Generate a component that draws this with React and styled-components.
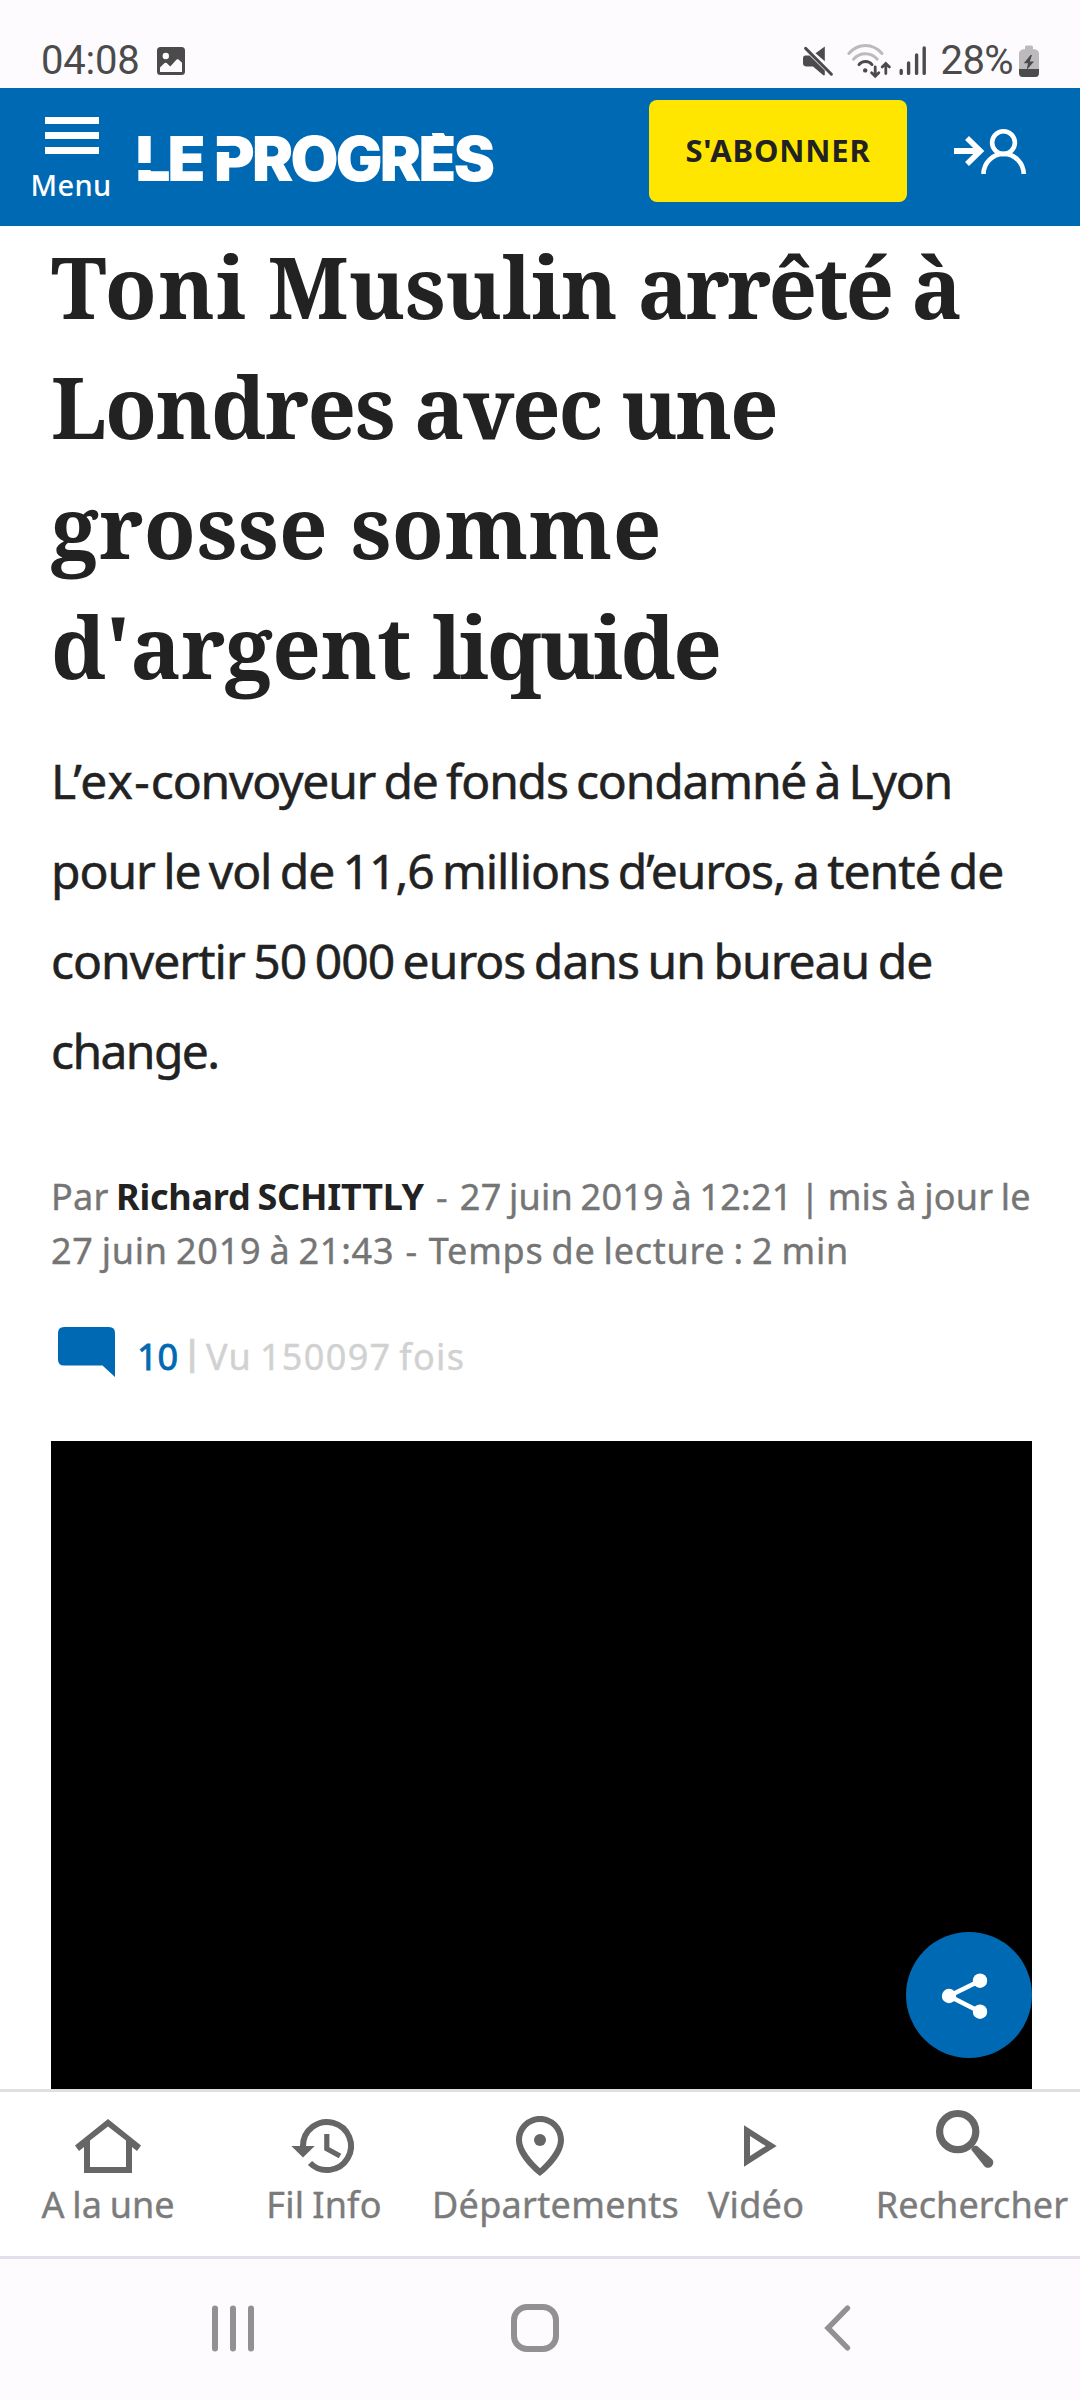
import React from "react";
import styled, { createGlobalStyle } from "styled-components";

const SANS = '"Noto Sans", "Open Sans", sans-serif';
const SERIF = '"Noto Serif", "DejaVu Serif Condensed", "DejaVu Serif", serif';
const BLUE = "#0069b3";

const GlobalStyle = createGlobalStyle`
  *, *::before, *::after { box-sizing: border-box; }
  body { margin: 0; background: #fff; font-family: ${SANS}; }
  h1, p { margin: 0; }
  svg { display: block; flex: none; overflow: visible; }
`;

const Screen = styled.div`
  width: 1080px;
  height: 2400px;
  display: flex;
  flex-direction: column;
  overflow: hidden;
  background: #fff;
`;

const StatusBar = styled.div`
  height: 88px;
  flex: none;
  display: flex;
  align-items: flex-start;
  padding: 39px 41px 0 41px;
  background: #fdfbfe;
  color: #4b4b4b;
`;

const StatusText = styled.span`
  margin-left: ${(p) => p.$gap || 0}px;
  font: 400 40px/44px Roboto, sans-serif;
  letter-spacing: ${(p) => p.$spacing}px;
`;

const StatusGroup = styled.div`
  margin-left: auto;
  display: flex;
  align-items: flex-start;
`;

const StatusIcon = styled.svg`
  margin-left: ${(p) => p.$gap}px;
  margin-top: ${(p) => p.$drop}px;
`;

const Header = styled.header`
  height: 138px;
  flex: none;
  display: flex;
  align-items: flex-start;
  background: ${BLUE};
  color: #fff;
`;

const MenuButton = styled.div`
  width: 84px;
  margin: 29px 0 0 30px;
  display: flex;
  flex-direction: column;
  align-items: center;
  gap: 13px;
`;

const MenuBars = styled.div`
  width: 54px;
  display: grid;
  gap: 8px;
`;

const Bar = styled.span`
  height: 7px;
  background: #fff;
`;

const MenuLabel = styled.span`
  margin-right: 2px;
  font-size: 29px;
  line-height: 36px;
  font-weight: 500;
  letter-spacing: 0.4px;
`;

const Logo = styled.div`
  position: relative;
  display: flex;
  gap: 11.5px;
  margin: 39.5px 0 0 21.5px;
  font: 900 62px/62px Inter, sans-serif;
`;

const LogoWord = styled.span`
  letter-spacing: ${(p) => p.$spacing}px;
  white-space: nowrap;
`;

const CutAccent = styled.span`
  display: inline-block;
  clip-path: inset(8px 0 0 0);
`;

const LogoCut = styled.span`
  position: absolute;
  left: ${(p) => p.$x}px;
  top: ${(p) => p.$y}px;
  width: ${(p) => p.$w}px;
  height: ${(p) => p.$h}px;
  background: ${BLUE};
`;

const LogoTick = styled.span`
  position: absolute;
  left: 296px;
  top: 5.5px;
  width: 15px;
  height: 5px;
  background: #fff;
  clip-path: polygon(0 0, 80% 0, 100% 100%, 14% 100%);
`;

const Subscribe = styled.div`
  width: 258px;
  height: 102px;
  margin: 12px 47px 0 auto;
  padding-bottom: 3px;
  display: flex;
  align-items: center;
  justify-content: center;
  border-radius: 8px;
  background: #ffe600;
  color: #222;
  font-size: 31px;
  line-height: 40px;
  font-weight: 700;
  letter-spacing: 0.8px;
`;

const LoginIcon = styled.svg`
  margin: 48px 53px 0 0;
`;

const Article = styled.main`
  flex: none;
  height: 1863px;
  padding: 0 48px 0 51px;
  position: relative;
`;

const Title = styled.h1`
  font-family: ${SERIF};
  font-size: 85px;
  line-height: 120px;
  font-weight: 700;
  color: #222;
`;

const Lead = styled.p`
  margin-top: 30px;
  font-size: 48px;
  line-height: 90px;
  word-spacing: -3px;
  color: #222;
  -webkit-text-stroke: 0.5px currentColor;
`;

const Meta = styled.p`
  margin-top: 74px;
  font-size: 36px;
  line-height: 54px;
  word-spacing: -2px;
  color: #757575;
  -webkit-text-stroke: 0.4px currentColor;
`;

const Line = styled.span`
  display: block;
  width: max-content;
  white-space: nowrap;
  letter-spacing: ${(p) => p.$spacing || 0}px;
`;

const Word = styled.span`
  letter-spacing: ${(p) => p.$spacing}px;
`;

const Dash = styled.span`
  margin: 0 ${(p) => p.$gap}px;
`;

const Author = styled.strong`
  font-weight: 700;
  letter-spacing: -0.25px;
  color: #222;
  -webkit-text-stroke: 0;
`;

const Stats = styled.div`
  display: flex;
  margin: 49px 0 0 7px;
  height: 50px;
  font-size: 36px;
  line-height: 50px;
  color: #d1d1d1;
  -webkit-text-stroke: 0.4px currentColor;
`;

const Count = styled.span`
  margin: 5px 0 0 22px;
  width: 41px;
  font-weight: 400;
  color: ${BLUE};
  -webkit-text-stroke: 0.9px currentColor;
`;

const Divider = styled.span`
  width: 28px;
  text-align: center;
  font-size: 34px;
  font-weight: 700;
`;

const Views = styled.span`
  margin-top: 5px;
  white-space: nowrap;
  word-spacing: -3px;
  letter-spacing: 1.35px;
`;

const Video = styled.div`
  margin-top: 64px;
  width: 981px;
  height: 648px;
  background: #000;
`;

const ShareButton = styled.div`
  position: absolute;
  right: 48px;
  bottom: 31px;
  width: 126px;
  height: 126px;
  border-radius: 50%;
  background: ${BLUE};
`;

const TabBar = styled.nav`
  height: 167px;
  flex: none;
  display: grid;
  grid-template-columns: repeat(5, 216px);
  border-top: 3px solid #e0e0e0;
  background: #fff;
`;

const Tab = styled.div`
  padding-top: 18px;
  color: #666;
`;

const TabIcon = styled.svg`
  margin: 0 auto;
`;

const TabLabel = styled.div`
  font-size: 36px;
  line-height: 45px;
  text-align: center;
  white-space: nowrap;
  color: #7b7b7b;
  -webkit-text-stroke: 0.4px currentColor;
  word-spacing: -1.5px;
  letter-spacing: ${(p) => p.$spacing}px;
`;

const SystemNav = styled.div`
  flex: none;
  height: 144px;
  border-top: 3px solid #e3e0ec;
  background: #fdfbfe;
  display: flex;
  align-items: flex-start;
  padding: 45px 0 0 211px;
`;

const NavGlyph = styled.svg`
  margin-left: ${(p) => p.$gap}px;
`;

const TABS = [
  {
    label: "A la une",
    spacing: 0,
    icon: (
      <path
        fillRule="evenodd"
        fill="currentColor"
        d="M36 9 69 35.5 65 41 60 37V63H12V37L7 41 3 35.5ZM36 16.6 18 30.4V57H54V30.4Z"
      />
    ),
  },
  {
    label: "Fil Info",
    spacing: 0.2,
    icon: (
      <>
        <path d="M15 36A24 24 0 1 1 22 53" fill="none" stroke="currentColor" strokeWidth="6" />
        <path d="M3.3 36H26.7L15 47.6Z" fill="currentColor" />
        <path d="M38.8 24V38.8L52 46" fill="none" stroke="currentColor" strokeWidth="5.2" />
      </>
    ),
  },
  {
    label: "Départements",
    spacing: 0.3,
    icon: (
      <>
        <path
          fillRule="evenodd"
          fill="currentColor"
          d="M36 6C22.7 6 12 16.7 12 30C12 48.5 36 66 36 66S60 48.5 60 30C60 16.7 49.3 6 36 6ZM18 30C18 20 26 12 36 12S54 20 54 30C54 39.5 44 50.5 36 58.2C28 50.5 18 39.5 18 30Z"
        />
        <circle cx="36" cy="30" r="6" fill="currentColor" />
      </>
    ),
  },
  {
    label: "Vidéo",
    spacing: 0.3,
    icon: (
      <path
        fillRule="evenodd"
        fill="currentColor"
        d="M24 15.3 56.7 36 24 56.7ZM30 25.9V46.1L45.7 36Z"
      />
    ),
  },
  {
    label: "Rechercher",
    spacing: 0.1,
    icon: (
      <>
        <circle cx="21.7" cy="21.6" r="18.1" fill="none" stroke="currentColor" strokeWidth="7.2" />
        <path
          d="M35.3 39.8L48.4 56.2C50.5 58.4 53.5 58.2 55.6 56.4C57.8 54.2 58 51 55.9 49L41.5 36.2C38.5 35 35.2 37 35.3 39.8Z"
          fill="currentColor"
        />
      </>
    ),
  },
];

export default function App() {
  return (
    <>
      <GlobalStyle />
      <Screen>
        <StatusBar>
          <StatusText $spacing={-0.2}>04:08</StatusText>
          <StatusIcon $gap={17.4} $drop={8} width="28" height="28" viewBox="0 0 28 28">
            <path
              fillRule="evenodd"
              fill="#4b4b4b"
              d="M3.5 0H24.5A3.5 3.5 0 0 1 28 3.5V24.5A3.5 3.5 0 0 1 24.5 28H3.5A3.5 3.5 0 0 1 0 24.5V3.5A3.5 3.5 0 0 1 3.5 0ZM8.8 5.8A3.2 3.2 0 1 0 8.8 12.2A3.2 3.2 0 1 0 8.8 5.8ZM3 25H25V15.8L21.6 12.4Q20.6 11.8 19.6 12.6L13.3 19.4L9.6 15.9Q8.6 15.3 7.6 16.1L3 20.5Z"
            />
          </StatusIcon>
          <StatusGroup>
            <StatusIcon $gap={0} $drop={6} width="30" height="32" viewBox="0 0 30 32" fill="#4b4b4b">
              <path d="M12.5 8.2 21.8 1.4V16.3Z" />
              <path d="M0 13.5Q0 10.8 2.6 10.6H6.5L21.8 25.5V29.5Q21.5 31 20 30L10 21.4H3Q0 21.2 0 18.3Z" />
              <path d="M2.6 3.4 28.4 29.2" stroke="#4b4b4b" strokeWidth="3" strokeLinecap="round" />
            </StatusIcon>
            <StatusIcon $gap={14} $drop={5} width="44" height="34" viewBox="0 0 44 34" fill="none" strokeLinecap="round">
              <path d="M1.8 9.5Q9 1.5 18.5 1.5T35 9.5" stroke="#bcbabd" strokeWidth="3" />
              <path d="M6.5 15.2Q11.5 9.7 18.5 9.7T30.3 15.2" stroke="#bcbabd" strokeWidth="3" />
              <path d="M12 20.6Q14.5 17.6 18.5 17.6T25 20.6" stroke="#4b4b4b" strokeWidth="3" />
              <circle cx="18.2" cy="26.4" r="2.2" fill="#4b4b4b" />
              <path
                d="M28.2 23V32M24.6 28.8 28.2 32.2 31.8 28.8M38.8 29.5V19.5M35.2 23 38.8 19.4 42.4 23"
                stroke="#4b4b4b"
                strokeWidth="2.8"
              />
            </StatusIcon>
            <StatusIcon
              $gap={8}
              $drop={7}
              width="28"
              height="30"
              viewBox="0 0 28 30"
              stroke="#4b4b4b"
              strokeWidth="3.4"
              strokeLinecap="round"
            >
              <path d="M2.2 24.5V27.4M9.6 17V27.4M17.6 9V27.4M25.2 2V27.4" />
            </StatusIcon>
            <StatusText $gap={14} $spacing={-0.6}>28%</StatusText>
            <StatusIcon $gap={6} $drop={6} width="20" height="32" viewBox="0 0 20 32">
              <path
                d="M6 2Q6 .5 7.5.5H12.5Q14 .5 14 2V4.3H16Q20 5.5 20 8.5V25H0V8.5Q0 5.5 4 4.3H6Z"
                fill="#bcbabd"
              />
              <path d="M0 24H20V28Q20 32 16.5 32H3.5Q0 32 0 28Z" fill="#4b4b4b" />
              <path d="M11.5 10 4.8 18.2H9L7.6 25 15 16.4H10.8L13 10Z" fill="#4b4b4b" />
            </StatusIcon>
          </StatusGroup>
        </StatusBar>

        <Header>
          <MenuButton>
            <MenuBars>
              <Bar />
              <Bar />
              <Bar />
            </MenuBars>
            <MenuLabel>Menu</MenuLabel>
          </MenuButton>
          <Logo>
            <LogoWord $spacing={-3}>LE</LogoWord>
            <LogoWord $spacing={-2.8}>
              PROGR<CutAccent>È</CutAccent>S
            </LogoWord>
            <LogoCut $x={0} $y={35.3} $w={16} $h={7.3} />
            <LogoCut $x={78} $y={18.3} $w={17} $h={6} />
            <LogoTick />
          </Logo>
          <Subscribe>S'ABONNER</Subscribe>
          <LoginIcon width="73" height="38" viewBox="0 0 73 38" fill="none" stroke="#fff">
            <path d="M0 15H26" strokeWidth="6" />
            <path d="M13 2 26.3 15 13 28" strokeWidth="5.6" />
            <circle cx="49.5" cy="6.6" r="11.4" strokeWidth="4.6" />
            <path d="M29.5 38A20 20 0 0 1 69.7 38" strokeWidth="4.6" />
          </LoginIcon>
        </Header>

        <Article>
          <Title>
            <Line $spacing={-2}>
              <Word $spacing={1.4}>Toni</Word> <Word $spacing={-0.3}>Musulin</Word>{" "}
              <Word $spacing={-3}>arrêté</Word> à
            </Line>
            <Line $spacing={-2.2}>
              <Word $spacing={-1.5}>Londres</Word> avec une
            </Line>
            <Line $spacing={0.4}>grosse somme</Line>
            <Line $spacing={-1.3}>
              <Word $spacing={-0.3}>d'argent</Word> <Word $spacing={-2.6}>liquide</Word>
            </Line>
          </Title>
          <Lead>
            <Line $spacing={-1.2}>
              <Word $spacing={1.2}>L’ex-</Word>convoyeur de fonds condamné à Lyon
            </Line>
            <Line $spacing={-1.08}>pour le vol de 11,6 millions d’euros, a tenté de</Line>
            <Line $spacing={-0.98}>convertir 50 000 euros dans un bureau de</Line>
            <Line $spacing={-1.6}>change.</Line>
          </Lead>
          <Meta>
            <Line $spacing={0.22}>
              Par <Author>Richard SCHITTLY</Author> <Dash $gap={4.5}>-</Dash> 27 juin 2019 à 12:21 | mis à jour le
            </Line>
            <Line $spacing={0.75}>
              27 juin 2019 à 21:43 <Dash $gap={3}>-</Dash> Temps de lecture : 2 min
            </Line>
          </Meta>
          <Stats>
            <svg width="57" height="50" viewBox="0 0 57 50">
              <path d="M6 0H51Q57 0 57 6V50L44.5 38.5H6Q0 38.5 0 32.5V6Q0 0 6 0Z" fill={BLUE} />
            </svg>
            <Count>10</Count>
            <Divider>|</Divider>
            <Views>Vu 150097 fois</Views>
          </Stats>
          <Video />
          <ShareButton>
            <svg width="126" height="126" viewBox="0 0 126 126" fill="#fff">
              <path d="M74 48.7 43 64 74 79.7" fill="none" stroke="#fff" strokeWidth="4.6" />
              <circle cx="43" cy="64" r="7.2" />
              <circle cx="74" cy="48.7" r="7.2" />
              <circle cx="74" cy="79.7" r="7.2" />
            </svg>
          </ShareButton>
        </Article>

        <TabBar>
          {TABS.map((tab) => (
            <Tab key={tab.label}>
              <TabIcon width="72" height="72" viewBox="0 0 72 72">
                {tab.icon}
              </TabIcon>
              <TabLabel $spacing={tab.spacing}>{tab.label}</TabLabel>
            </Tab>
          ))}
        </TabBar>

        <SystemNav>
          <NavGlyph
            $gap={0}
            width="44"
            height="48"
            viewBox="0 0 44 48"
            stroke="#919193"
            strokeWidth="6"
            strokeLinecap="round"
          >
            <path d="M4 4.5V44.5M22 4.5V44.5M40 4.5V44.5" />
          </NavGlyph>
          <NavGlyph $gap={256} width="48" height="48" viewBox="0 0 48 48" fill="none" stroke="#919193" strokeWidth="6">
            <rect x="3" y="3" width="42" height="42" rx="13" />
          </NavGlyph>
          <NavGlyph
            $gap={264}
            width="28"
            height="48"
            viewBox="0 0 28 48"
            fill="none"
            stroke="#919193"
            strokeWidth="5.4"
            strokeLinecap="round"
          >
            <path d="M24.5 4.2 5 24 24.5 43.8" />
          </NavGlyph>
        </SystemNav>
      </Screen>
    </>
  );
}
